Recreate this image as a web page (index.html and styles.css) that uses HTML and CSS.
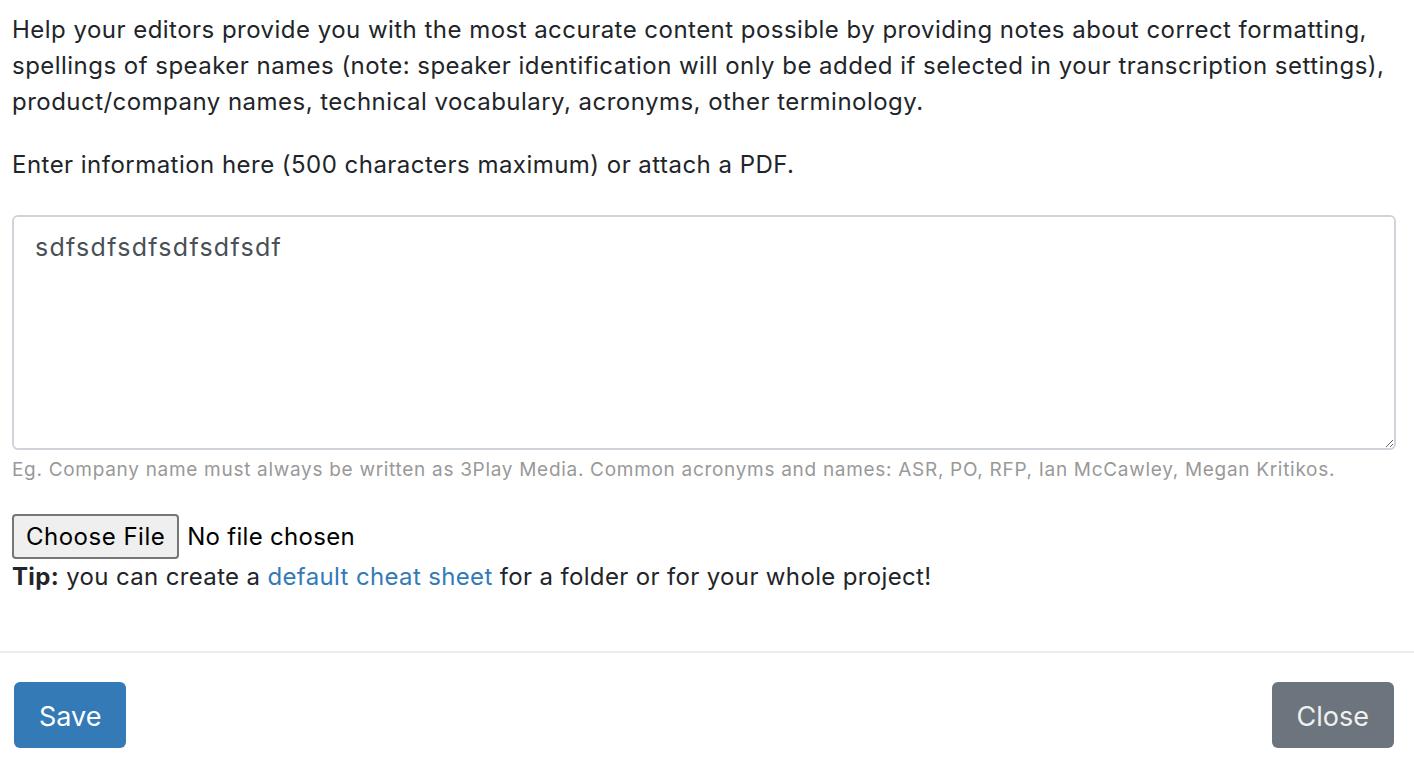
FILE: index.html
```html
<!DOCTYPE html>
<html lang="en">
<head>
<meta charset="utf-8">
<title>Cheat sheet</title>
<link rel="stylesheet" href="styles.css">
</head>
<body>
<div class="modal-body">
  <p class="intro">Help your editors provide you with the most accurate content possible by providing notes about correct formatting, spellings of speaker names (note: speaker identification will only be added if selected in your transcription settings), product/company names, technical vocabulary, acronyms, other terminology.</p>
  <p class="enter">Enter information here (500 characters maximum) or attach a PDF.</p>
  <textarea class="notes">sdfsdfsdfsdfsdfsdf</textarea>
  <div class="hint">Eg. Company name must always be written as 3Play Media. Common acronyms and names: ASR, PO, RFP, Ian McCawley, Megan Kritikos.</div>
  <div class="file-row"><input type="file" class="file-input"></div>
  <div class="tip"><strong>Tip:</strong> you can create a <a href="#" class="link">default cheat sheet</a> for a folder or for your whole project!</div>
</div>
<div class="modal-footer">
  <button class="btn btn-primary">Save</button>
  <button class="btn btn-secondary">Close</button>
</div>
</body>
</html>
```
FILE: styles.css
```css
html, body {
  margin: 0;
  padding: 0;
  background: #fff;
}
body {
  font-family: Inter, "Liberation Sans", sans-serif;
  font-size: 24px;
  line-height: 36px;
  letter-spacing: 0.47px;
  color: #212529;
}
.modal-body {
  padding: 12px 18px 56px 12px;
}
.intro {
  margin: 0 0 27px 0;
}
.enter {
  margin: 0 0 32px 0;
}
.notes {
  display: block;
  box-sizing: border-box;
  width: 100%;
  height: 235px;
  margin: 0;
  padding: 12px 21px;
  border: 2px solid #ced4da;
  border-radius: 6px;
  font-family: Inter, "Liberation Sans", sans-serif;
  font-size: 25px;
  line-height: 36px;
  letter-spacing: 1.3px;
  color: #495057;
  resize: vertical;
  outline: none;
}
.hint {
  margin-top: 6px;
  font-size: 19px;
  line-height: 27px;
  color: #999;
  letter-spacing: 0.7px;
  white-space: nowrap;
}
.file-row {
  margin-top: 31px;
  height: 45px;
  display: flex;
  align-items: center;
}
.file-input {
  font-family: Inter, "Liberation Sans", sans-serif;
  font-size: 24px;
  letter-spacing: 0.3px;
  color: #000;
}
.file-input::file-selector-button {
  font-family: Inter, "Liberation Sans", sans-serif;
  font-size: 24px;
  letter-spacing: 0.5px;
  height: 45px;
  padding: 0 12px;
  margin-right: 8px;
  background: #efefef;
  border: 2px solid #767676;
  border-radius: 4px;
  color: #000;
}
.tip {
  margin: 0;
  letter-spacing: 0.35px;
}
.tip strong {
  font-weight: 700;
}
.link {
  color: #337ab7;
  text-decoration: none;
}
.modal-footer {
  border-top: 2px solid #e9ecef;
  display: flex;
  justify-content: space-between;
  align-items: center;
  padding: 29px 20px 22px 14px;
}
.btn {
  font-family: Inter, "Liberation Sans", sans-serif;
  font-size: 27px;
  line-height: 40px;
  height: 66px;
  padding: 4px 25px 0 25px;
  border: none;
  border-radius: 6px;
  color: #fff;
}
.btn-primary {
  background: #337ab7;
}
.btn-secondary {
  background: #6c757d;
  color: #f0f0f0;
}
```
